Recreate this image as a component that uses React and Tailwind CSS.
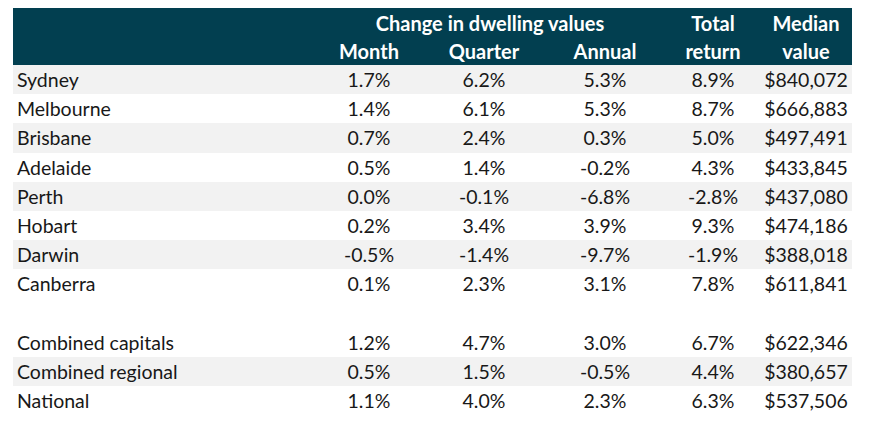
const rows = [
  ["Sydney", "1.7%", "6.2%", "5.3%", "8.9%", "$840,072"],
  ["Melbourne", "1.4%", "6.1%", "5.3%", "8.7%", "$666,883"],
  ["Brisbane", "0.7%", "2.4%", "0.3%", "5.0%", "$497,491"],
  ["Adelaide", "0.5%", "1.4%", "-0.2%", "4.3%", "$433,845"],
  ["Perth", "0.0%", "-0.1%", "-6.8%", "-2.8%", "$437,080"],
  ["Hobart", "0.2%", "3.4%", "3.9%", "9.3%", "$474,186"],
  ["Darwin", "-0.5%", "-1.4%", "-9.7%", "-1.9%", "$388,018"],
  ["Canberra", "0.1%", "2.3%", "3.1%", "7.8%", "$611,841"],
  null,
  ["Combined capitals", "1.2%", "4.7%", "3.0%", "6.7%", "$622,346"],
  ["Combined regional", "0.5%", "1.5%", "-0.5%", "4.4%", "$380,657"],
  ["National", "1.1%", "4.0%", "2.3%", "6.3%", "$537,506"],
];

const grid = "grid grid-cols-[301px_110px_120px_122px_94px_92px]";

const App = () => {
  return (
    <div className="bg-white w-[869px] h-[422px] pt-[8px] pl-[13px] font-['Lato',sans-serif] text-[19.5px] text-[#181818]">
      <div className="w-[839px]">
        <div className={`${grid} bg-[#023f50] text-white font-bold text-[20px] leading-[28px] pt-[1px]`}>
          <div></div>
          <div className="col-span-3 text-center">Change in dwelling values</div>
          <div className="text-center">Total</div>
          <div className="text-center">Median</div>
          <div></div>
          <div className="text-center">Month</div>
          <div className="text-center">Quarter</div>
          <div className="text-center">Annual</div>
          <div className="text-center">return</div>
          <div className="text-center">value</div>
        </div>
        {rows.map((row, i) =>
          row ? (
            <div
              key={i}
              className={`${grid} h-[29.2px] items-center ${i % 2 === 0 ? "bg-[#f2f2f2]" : "bg-white"}`}
            >
              <div className="pl-[4px]">{row[0]}</div>
              {row.slice(1).map((v, j) => (
                <div key={j} className="text-center">
                  {v}
                </div>
              ))}
            </div>
          ) : (
            <div key={i} className="h-[29.2px]"></div>
          )
        )}
      </div>
    </div>
  );
};

export default App;
